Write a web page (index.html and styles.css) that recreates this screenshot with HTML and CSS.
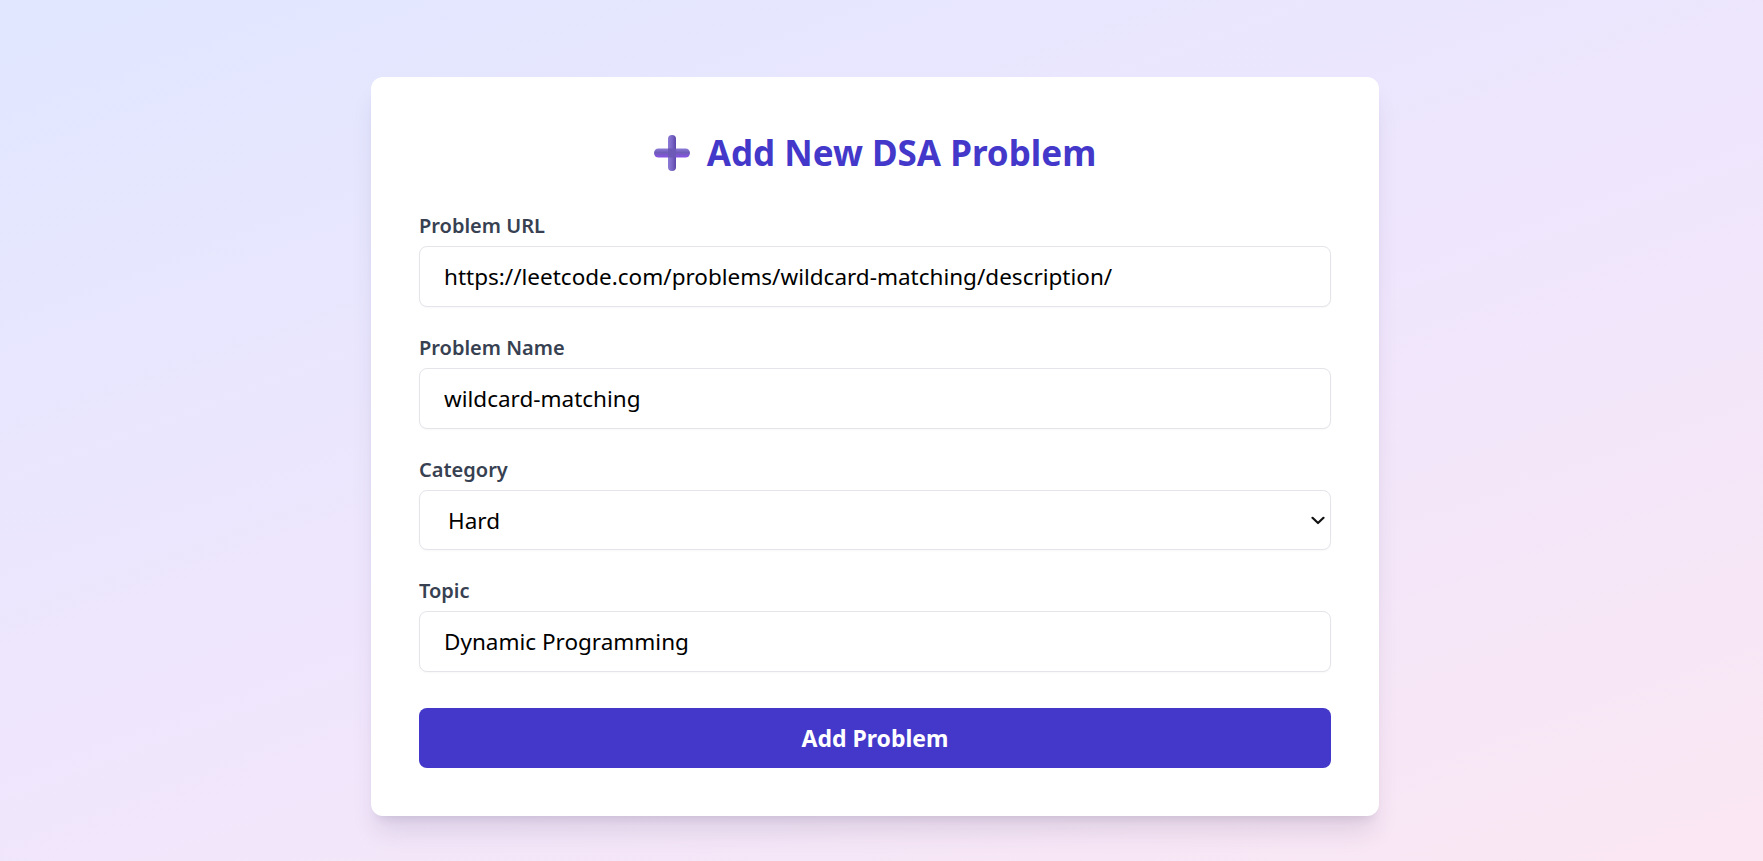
FILE: index.html
```html
<!DOCTYPE html>
<html lang="en">
<head>
<meta charset="utf-8">
<title>Add New DSA Problem</title>
<link rel="stylesheet" href="styles.css">
</head>
<body>
<main class="page">
  <section class="card">
    <h1 class="title">
      <svg class="title-icon" width="36" height="36" viewBox="0 0 36 36" aria-hidden="true">
        <defs>
          <linearGradient id="plusV" x1="0" y1="0" x2="1" y2="0">
            <stop offset="0" stop-color="#8c7ad6"/>
            <stop offset="0.5" stop-color="#7a66c6"/>
            <stop offset="1" stop-color="#5c46a8"/>
          </linearGradient>
          <linearGradient id="plusH" x1="0" y1="0" x2="0" y2="1">
            <stop offset="0" stop-color="#8d7bd8"/>
            <stop offset="0.45" stop-color="#6f5cb8"/>
            <stop offset="1" stop-color="#8a52e6"/>
          </linearGradient>
        </defs>
        <rect x="0" y="13.5" width="36" height="9" rx="4.5" fill="url(#plusH)"/>
        <rect x="14" y="0" width="8" height="36" rx="4" fill="url(#plusV)"/>
        <rect x="14" y="13.5" width="8" height="9" fill="#6d5ab6"/>
      </svg>
      <span>Add New DSA Problem</span>
    </h1>
    <form class="form">
      <div class="field">
        <label class="label" for="url">Problem URL</label>
        <input class="control" id="url" type="text" value="https://leetcode.com/problems/wildcard-matching/description/">
      </div>
      <div class="field">
        <label class="label" for="name">Problem Name</label>
        <input class="control" id="name" type="text" value="wildcard-matching">
      </div>
      <div class="field">
        <label class="label" for="cat">Category</label>
        <div class="select-wrap">
          <select class="control select" id="cat">
            <option>Easy</option>
            <option>Medium</option>
            <option selected>Hard</option>
          </select>
          <svg class="chevron" width="14" height="9" viewBox="0 0 14 9" aria-hidden="true">
            <path d="M1.5 1.8 L7 7 L12.5 1.8" fill="none" stroke="#111" stroke-width="2.2" stroke-linecap="round" stroke-linejoin="round"/>
          </svg>
        </div>
      </div>
      <div class="field">
        <label class="label" for="topic">Topic</label>
        <input class="control" id="topic" type="text" value="Dynamic Programming">
      </div>
      <button class="submit" type="button">Add Problem</button>
    </form>
  </section>
</main>
</body>
</html>
```

FILE: styles.css
```css
* {
  box-sizing: border-box;
}

html, body {
  margin: 0;
  padding: 0;
}

body {
  min-height: 100vh;
  font-family: "Noto Sans", "Open Sans", sans-serif;
  background: linear-gradient(160deg, #e0e7ff 0%, #efe6fd 50%, #fbe7f2 100%);
}

.page {
  display: flex;
  justify-content: center;
  padding: 77px 13px 60px 0;
}

.card {
  width: 1008px;
  background: #ffffff;
  border-radius: 12px;
  padding: 48px;
  box-shadow: 0 20px 25px -5px rgba(60, 40, 90, 0.12), 0 8px 10px -6px rgba(60, 40, 90, 0.12);
}

.title {
  margin: 0 0 37px;
  padding-top: 4px;
  display: flex;
  align-items: center;
  justify-content: center;
  gap: 17px;
  font-size: 35px;
  line-height: 48px;
  font-weight: 700;
  color: #4338ca;
}

.title-icon {
  flex: none;
}

.form {
  display: flex;
  flex-direction: column;
  gap: 29px;
}

.field {
  display: flex;
  flex-direction: column;
}

.label {
  display: block;
  margin-bottom: 8px;
  font-size: 20px;
  line-height: 24px;
  font-weight: 600;
  color: #374151;
}

.control {
  display: block;
  width: 100%;
  height: 61px;
  padding: 0 24px;
  border: 1px solid #e4e4ea;
  border-radius: 8px;
  background: #ffffff;
  font-family: inherit;
  font-size: 22.5px;
  color: #000000;
  outline: none;
  box-shadow: 0 1px 2px rgba(0, 0, 0, 0.03);
}

.select-wrap {
  position: relative;
}

.select {
  appearance: none;
  -webkit-appearance: none;
  padding-left: 28px;
  height: 60px;
}

.chevron {
  position: absolute;
  right: 6px;
  top: 26px;
  pointer-events: none;
}

.submit {
  margin-top: 7px;
  height: 60px;
  width: 100%;
  border: none;
  border-radius: 8px;
  background: #4338ca;
  color: #ffffff;
  font-family: inherit;
  font-size: 23px;
  font-weight: 700;
  cursor: pointer;
}
```
